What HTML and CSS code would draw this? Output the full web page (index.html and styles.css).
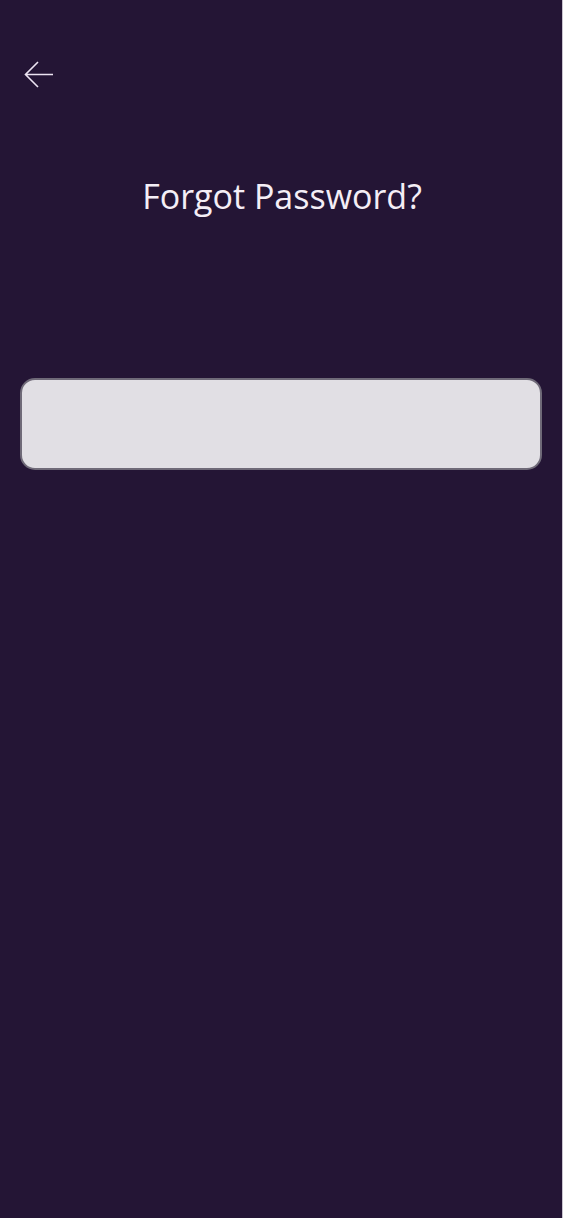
FILE: index.html
```html
<!DOCTYPE html>
<html>
<head>
<meta charset="utf-8">
<link rel="stylesheet" href="styles.css">
</head>
<body>
<div class="screen">
  <header class="topbar">
    <button class="back" aria-label="Back">
      <svg width="32" height="30" viewBox="0 0 32 30">
        <path d="M29 14.5H2.5M14 2L1.5 14.5L14 27" fill="none" stroke="#ece4f2" stroke-width="1.6"/>
      </svg>
    </button>
  </header>
  <h1 class="title">Forgot Password?</h1>
  <div class="field"><input class="input" type="text"></div>
</div>
</body>
</html>
```
FILE: styles.css
```css
html, body {
  margin: 0;
  padding: 0;
  background: #241535;
}
.screen {
  width: 562px;
  height: 1218px;
  background: #241535;
  border-right: 1px solid #c9c4cf;
  box-sizing: content-box;
  display: flex;
  flex-direction: column;
}
.topbar {
  padding: 60px 0 0 24px;
  height: 30px;
}
.back {
  background: none;
  border: 0;
  padding: 0;
  display: block;
  cursor: pointer;
}
.back svg { display: block; }
.title {
  margin: 84px 0 0;
  text-align: center;
  font-family: "Open Sans", sans-serif;
  font-weight: 400;
  font-size: 34px;
  line-height: 44px;
  color: #f4eef6;
  padding-left: 2px;
}
.field {
  padding: 0 20px;
  margin-top: 160px;
}
.input {
  display: block;
  width: 100%;
  box-sizing: border-box;
  height: 92px;
  border: 2px solid #6f6a78;
  border-radius: 15px;
  background: #e1dfe4;
  outline: none;
}
```
